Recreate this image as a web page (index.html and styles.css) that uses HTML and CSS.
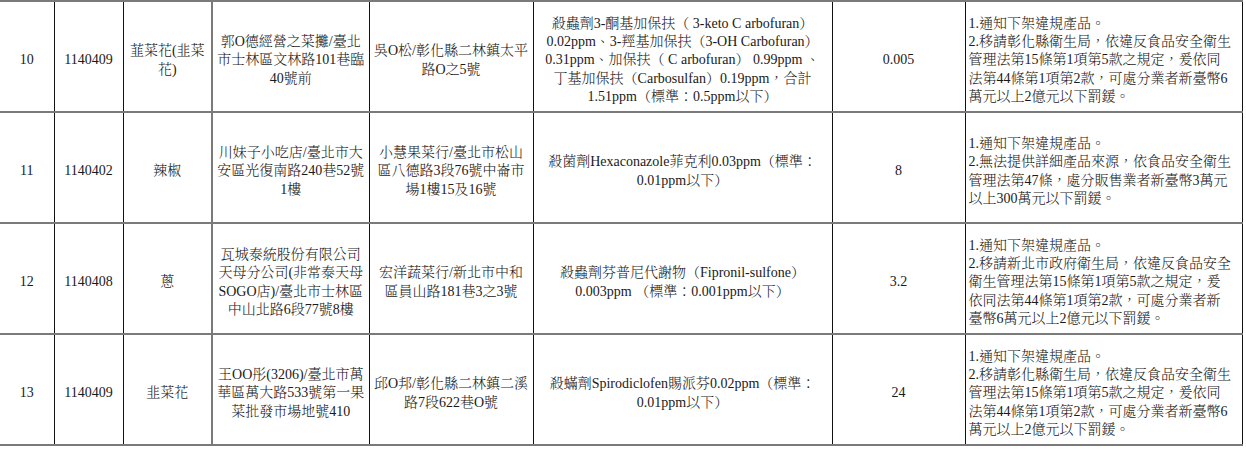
FILE: index.html
```html
<!DOCTYPE html>
<html lang="zh-Hant">
<head>
<meta charset="utf-8">
<title>違規產品</title>
<link rel="stylesheet" href="styles.css">
</head>
<body>
<table class="grid">
  <colgroup>
    <col class="c1"><col class="c2"><col class="c3"><col class="c4"><col class="c5"><col class="c6"><col class="c7"><col class="c8">
  </colgroup>
  <tbody>
    <tr>
      <td>10</td>
      <td>1140409</td>
      <td>韮菜花(韭菜<br>花)</td>
      <td>郭O德經營之菜攤/臺北<br>市士林區文林路101巷臨<br>40號前</td>
      <td>吳O松/彰化縣二林鎮太平<br>路O之5號</td>
      <td>殺蟲劑3-酮基加保扶（ 3-keto C arbofuran）<br>0.02ppm、3-羥基加保扶（3-OH Carbofuran）<br>0.31ppm、加保扶（ C arbofuran） 0.99ppm 、<br>丁基加保扶（Carbosulfan）0.19ppm，合計<br>1.51ppm（標準：0.5ppm以下）</td>
      <td>0.005</td>
      <td class="left">1.通知下架違規產品。<br>2.移請彰化縣衛生局，依違反食品安全衛生<br>管理法第15條第1項第5款之規定，爰依同<br>法第44條第1項第2款，可處分業者新臺幣6<br>萬元以上2億元以下罰鍰。</td>
    </tr>
    <tr>
      <td>11</td>
      <td>1140402</td>
      <td>辣椒</td>
      <td>川妹子小吃店/臺北市大<br>安區光復南路240巷52號<br>1樓</td>
      <td>小慧果菜行/臺北市松山<br>區八德路3段76號中崙市<br>場1樓15及16號</td>
      <td>殺菌劑Hexaconazole菲克利0.03ppm（標準：<br>0.01ppm以下）</td>
      <td>8</td>
      <td class="left">1.通知下架違規產品。<br>2.無法提供詳細產品來源，依食品安全衛生<br>管理法第47條，處分販售業者新臺幣3萬元<br>以上300萬元以下罰鍰。</td>
    </tr>
    <tr>
      <td>12</td>
      <td>1140408</td>
      <td>蔥</td>
      <td>瓦城泰統股份有限公司<br>天母分公司(非常泰天母<br>SOGO店)/臺北市士林區<br>中山北路6段77號8樓</td>
      <td>宏洋蔬菜行/新北市中和<br>區員山路181巷3之3號</td>
      <td>殺蟲劑芬普尼代謝物（Fipronil-sulfone）<br>0.003ppm （標準：0.001ppm以下）</td>
      <td>3.2</td>
      <td class="left">1.通知下架違規產品。<br>2.移請新北市政府衛生局，依違反食品安全<br>衛生管理法第15條第1項第5款之規定，爰<br>依同法第44條第1項第2款，可處分業者新<br>臺幣6萬元以上2億元以下罰鍰。</td>
    </tr>
    <tr>
      <td>13</td>
      <td>1140409</td>
      <td>韭菜花</td>
      <td>王OO彤(3206)/臺北市萬<br>華區萬大路533號第一果<br>菜批發市場地號410</td>
      <td>邱O邦/彰化縣二林鎮二溪<br>路7段622巷O號</td>
      <td>殺蟎劑Spirodiclofen賜派芬0.02ppm（標準：<br>0.01ppm以下）</td>
      <td>24</td>
      <td class="left">1.通知下架違規產品。<br>2.移請彰化縣衛生局，依違反食品安全衛生<br>管理法第15條第1項第5款之規定，爰依同<br>法第44條第1項第2款，可處分業者新臺幣6<br>萬元以上2億元以下罰鍰。</td>
    </tr>
  </tbody>
</table>
</body>
</html>
```
FILE: styles.css
```css
html, body {
  margin: 0;
  padding: 0;
  background: #ffffff;
}

.grid {
  border-collapse: collapse;
  table-layout: fixed;
  width: 1242px;
  font-family: "Liberation Serif", "Noto Serif CJK TC", "Noto Sans CJK TC", serif;
  font-size: 14px;
  font-weight: 300;
  line-height: 18.3px;
  color: #1a1a1a;
}

.c1 { width: 54px; }
.c2 { width: 69px; }
.c3 { width: 89px; }
.c4 { width: 157px; }
.c5 { width: 164px; }
.c6 { width: 299px; }
.c7 { width: 133px; }
.c8 { width: 277px; }

.grid td {
  height: 101px;
  padding: 8px 2px 0 2px;
  text-align: center;
  vertical-align: middle;
  white-space: nowrap;
  overflow: hidden;
  border-top: 2px solid #7a7a7a;
  border-bottom: 2px solid #7a7a7a;
  border-left: 1px solid #111111;
  border-right: 1px solid #111111;
}

.grid td:first-child {
  border-left: none;
}

.grid td:nth-child(4) {
  border-left: 2px solid #7a7a7a;
}

.grid td.left {
  text-align: left;
  padding-left: 3px;
}
```
